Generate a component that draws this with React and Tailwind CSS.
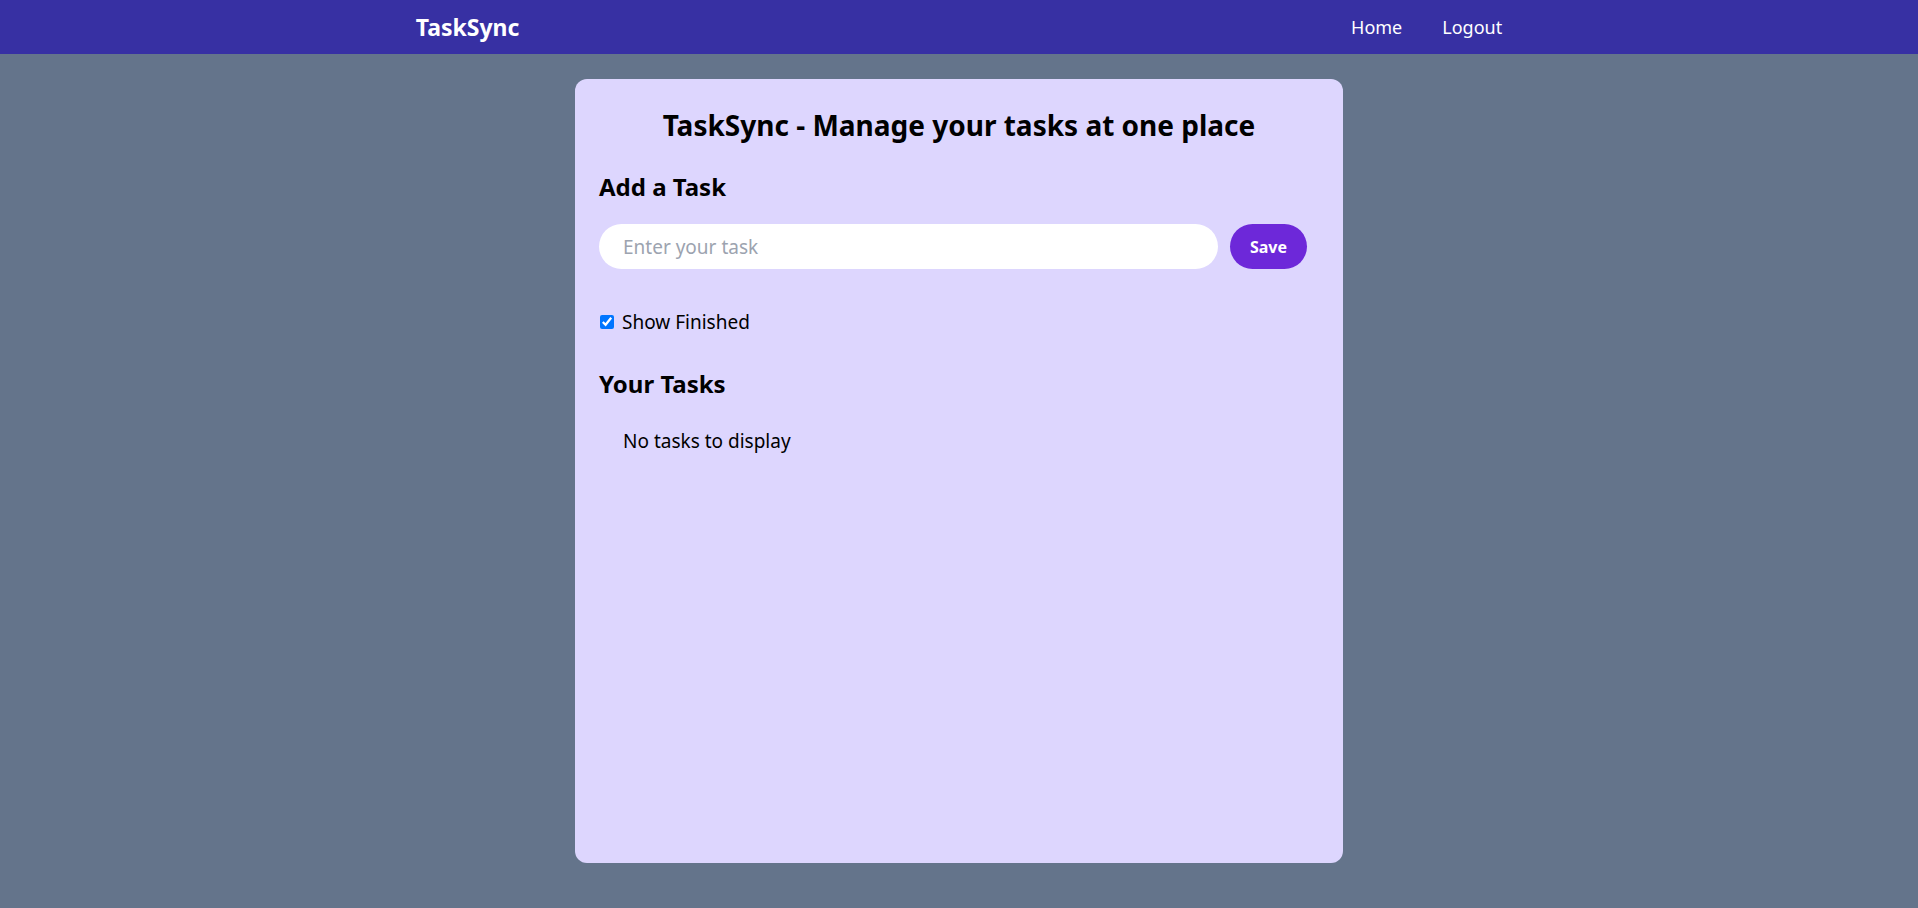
import { useState } from 'react';

const App = () => {
  const [task, setTask] = useState("");
  const [showFinished, setShowFinished] = useState(true);

  return (
    <div className="min-h-screen bg-[#64748b] font-['Noto_Sans',sans-serif] text-black">
      {/* Navbar */}
      <nav className="flex justify-around items-center h-[54px] bg-[#3730a3] text-white">
        <div className="text-[23px] font-bold">TaskSync</div>
        <ul className="flex gap-10 text-lg">
          <li className="cursor-pointer">Home</li>
          <li className="cursor-pointer">Logout</li>
        </ul>
      </nav>

      {/* Card */}
      <div className="mx-auto mt-[25px] w-[768px] h-[784px] rounded-xl bg-[#ddd6fe] px-6 pt-7">
        <h1 className="text-center text-[28px] leading-9 font-bold">TaskSync - Manage your tasks at one place</h1>

        {/* Add a task */}
        <h2 className="mt-7 text-2xl leading-8 font-bold">Add a Task</h2>
        <div className="flex mt-[21px]">
          <input
            type="text"
            value={task}
            onChange={e => setTask(e.target.value)}
            placeholder="Enter your task"
            className="w-full h-[45px] rounded-full bg-white px-6 text-[19px] outline-none placeholder:text-[#9ca3af]"
          />
          <button className="mx-3 px-5 rounded-full bg-[#6d28d9] text-white text-base font-bold">Save</button>
        </div>

        {/* Show finished */}
        <div className="flex items-center mt-[39px] text-[19px] leading-7">
          <input
            type="checkbox"
            checked={showFinished}
            onChange={() => setShowFinished(!showFinished)}
            className="w-[14px] h-[14px] ml-px"
          />
          <label className="ml-2">Show Finished</label>
        </div>

        {/* Tasks */}
        <h2 className="mt-8 text-2xl leading-8 font-bold">Your Tasks</h2>
        <div className="ml-6 mt-[27px] text-[19px] leading-7">No tasks to display</div>
      </div>
    </div>
  );
};

export default App;
